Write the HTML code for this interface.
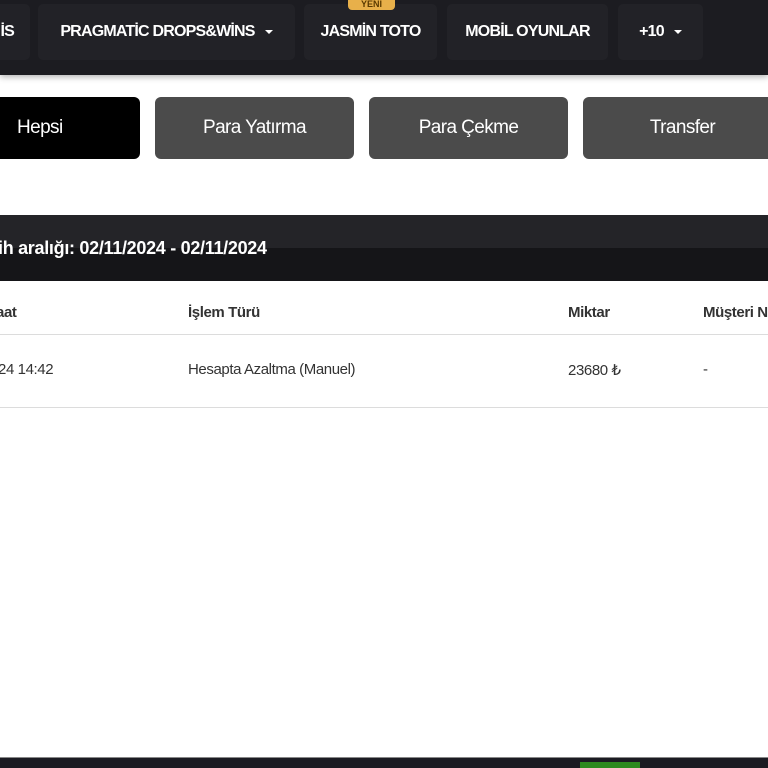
<!DOCTYPE html>
<html><head><meta charset="utf-8"><style>
*{margin:0;padding:0;box-sizing:border-box}
body{width:768px;height:768px;overflow:hidden;background:#fff;font-family:"Liberation Sans",sans-serif;position:relative}
.top{position:absolute;left:0;top:0;width:768px;height:75px;background:#1c1c21;box-shadow:0 2px 6px rgba(0,0,0,.3)}
.nav{position:absolute;top:4px;height:56px;background:#222227;border-radius:5px;color:#fff;font-weight:bold;font-size:16px;letter-spacing:-0.8px;display:flex;align-items:center;justify-content:center}
.car{display:inline-block;margin-left:10px;border-left:4px solid transparent;border-right:4px solid transparent;border-top:4px solid #fff}
.badge{position:absolute;left:348px;top:-4px;width:47px;height:14px;background:#e8b04a;border-radius:4px;font-size:9px;font-weight:bold;color:#5a3a00;text-align:center;line-height:16px}
.tab{position:absolute;top:97px;height:62px;border-radius:6px;background:#4b4b4b;color:#fff;font-size:19px;letter-spacing:-0.6px;display:flex;align-items:center;justify-content:center}
.hd{position:absolute;left:0;top:215px;width:768px;height:66px;background:#151518}
.hd .t{position:absolute;left:0;top:0;width:768px;height:33px;background:#242428}
.hd span{position:absolute;left:-2px;top:23px;color:#fff;font-weight:bold;font-size:18px;letter-spacing:-0.3px}
.c{position:absolute;font-size:15px;color:#333;letter-spacing:-0.4px}
.b{font-weight:bold;color:#333}
.ln{position:absolute;left:0;width:768px;height:1px;background:#dcdcdc}
</style></head><body>
<div class="top">
<div class="nav" style="left:-20px;width:50px;justify-content:flex-end;padding-right:16px">İS</div>
<div class="nav" style="left:38px;width:257px">PRAGMATİC DROPS&amp;WİNS<span class="car"></span></div>
<div class="nav" style="left:304px;width:133px">JASMİN TOTO</div>
<div class="nav" style="left:447px;width:161px">MOBİL OYUNLAR</div>
<div class="nav" style="left:618px;width:85px">+10<span class="car"></span></div>
<div class="badge">YENİ</div>
</div>
<div class="tab" style="left:-20px;width:160px;background:#000;justify-content:flex-start;padding-left:37px">Hepsi</div>
<div class="tab" style="left:155px;width:199px">Para Yatırma</div>
<div class="tab" style="left:369px;width:199px">Para Çekme</div>
<div class="tab" style="left:583px;width:199px">Transfer</div>
<div class="hd"><div class="t"></div><span>ih aralığı: 02/11/2024 - 02/11/2024</span></div>
<div class="c b" style="left:-4px;top:304px">aat</div>
<div class="c b" style="left:188px;top:304px">İşlem Türü</div>
<div class="c b" style="left:568px;top:304px">Miktar</div>
<div class="c b" style="left:703px;top:304px">Müşteri N</div>
<div class="ln" style="top:334px"></div>
<div class="c" style="left:-2px;top:361px">24 14:42</div>
<div class="c" style="left:188px;top:361px">Hesapta Azaltma (Manuel)</div>
<div class="c" style="left:568px;top:361px">23680 ₺</div>
<div class="c" style="left:703px;top:361px">-</div>
<div class="ln" style="top:407px"></div>
<div style="position:absolute;left:0;top:757px;width:768px;height:11px;background:#1b1b22;border-top:1px solid #888"></div>
<div style="position:absolute;left:580px;top:762px;width:60px;height:6px;background:#2d8a1e"></div>
</body></html>
